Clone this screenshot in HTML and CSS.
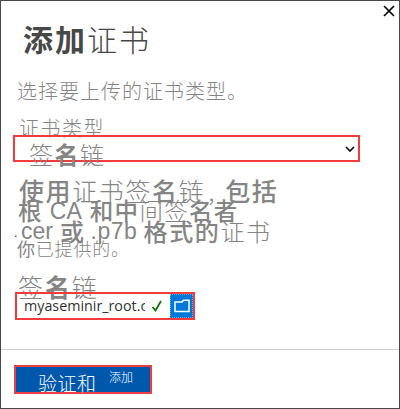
FILE: index.html
```html
<!DOCTYPE html>
<html lang="zh-CN">
<head>
<meta charset="utf-8">
<title>添加证书</title>
<link rel="stylesheet" href="styles.css">
</head>
<body>
<main class="dialog">
  <svg class="close" viewBox="0 0 12 12"><path d="M1 1L11 11M11 1L1 11"/></svg>
  <h1 class="row title"><b>添加</b><span>证书</span></h1>
  <p class="row intro">选择要上传的证书类型。</p>
  <div class="row label">证书类型</div>
  <div class="select">
    <span class="value">签<b>名</b>链</span>
    <svg class="chevron" viewBox="0 0 10 6"><path d="M1 1L5 5L9 1"/></svg>
  </div>
  <div class="help">
    <div class="row first"><b>使用</b>证书签<b>名</b>链<span class="comma">,</span><b>包括</b></div>
    <div class="row second"><b>根</b><span class="latin ca">CA</span><b>和中</b>间签<b>名者</b></div>
    <div class="row third"><span class="dot">.</span><span class="latin cer">cer</span><b>或</b><span class="latin ext">.p7b</span><b>格式的</b>证书</div>
    <div class="row fourth"><b>你</b>已提供的。</div>
  </div>
  <div class="row chain">签<b>名</b>链</div>
  <div class="file">
    <span class="name">myaseminir_root.ce</span>
    <svg class="check" viewBox="0 0 12 12"><path d="M1.5 7L4.5 10.5L10 1"/></svg>
    <span class="browse"><svg viewBox="0 0 16 14"><path d="M1 12.5V3H8L9.5 1.2H15V12.5Z"/></svg></span>
  </div>
  <footer class="footer">
    <div class="button"><span class="verify">验证和</span><span class="add">添加</span></div>
  </footer>
</main>
</body>
</html>
```
FILE: styles.css
```css
* { box-sizing: border-box; }
body { margin: 0; font-family: "Noto Sans CJK SC", sans-serif; font-weight: 300; }
b { font-weight: 500; }
.dialog { position: relative; display: flex; flex-direction: column; width: 400px; height: 409px; border: 1px solid #484848; background: #fff; color: #858585; overflow: hidden; }
.close { position: absolute; left: 382px; top: 4px; width: 12px; height: 12px; fill: none; stroke: #000; stroke-width: 1.7; }
.row { display: flex; align-items: center; flex: none; margin: 0; line-height: 1; white-space: pre; }
.title { height: 40px; margin-top: 17px; padding-left: 22px; font-size: 30px; letter-spacing: 2px; font-weight: 300; color: #484848; }
.title b { font-weight: 700; }
.intro { height: 20px; margin-top: 23px; padding-left: 16px; font-size: 20px; letter-spacing: 1px; }
.label { height: 20px; margin-top: 17px; padding-left: 18px; font-size: 20px; letter-spacing: 1.5px; }
.select { display: flex; flex: none; align-items: center; justify-content: space-between; width: 347px; height: 27px; margin: -3px 0 0 12px; padding: 0 3px 0 14px; border: 2px solid #f13c3c; }
.value { margin-top: 10px; line-height: 24px; font-size: 24px; letter-spacing: 1.5px; }
.value b, .chain b { font-weight: 700; }
.chevron { width: 10px; height: 6px; fill: none; stroke: #000; stroke-width: 1.6; }
.help { flex: none; height: 79px; margin-top: 18px; }
.first { height: 20px; padding-left: 18px; font-size: 25px; letter-spacing: 1.6px; }
.comma { width: 20px; padding-left: 3px; }
.second { height: 22px; padding-left: 17px; font-size: 23.5px; letter-spacing: 1.3px; }
.third { height: 18px; padding-left: 13px; font-size: 24px; letter-spacing: 1.6px; }
.fourth { height: 16px; padding-left: 16px; font-size: 18px; letter-spacing: .8px; }
.fourth b { font-weight: 400; }
.latin { font-family: "Liberation Sans", sans-serif; font-weight: 400; font-size: 23px; letter-spacing: 0; }
.ca { width: 47px; padding-left: 7px; }
.cer { width: 39px; }
.ext { width: 58px; padding-left: 5px; letter-spacing: .5px; }
.dot { width: 7px; font-size: 14px; color: #222; }
.chain { height: 26px; margin-top: 14px; padding-left: 17px; font-size: 25px; letter-spacing: 1.9px; }
.file { display: flex; flex: none; align-items: center; width: 180px; height: 28px; margin: -7px 0 0 14px; padding-left: 7px; border: 2px solid #f13c3c; }
.name { width: 121px; overflow: hidden; font: 400 14.3px/20px "Open Sans", sans-serif; color: #333; white-space: nowrap; }
.check { width: 12px; height: 12px; margin-left: 6px; fill: none; stroke: #087808; stroke-width: 1.8; }
.browse { display: flex; align-items: center; justify-content: center; width: 23px; height: 24px; margin-left: 7px; border: 1px dotted #69aeea; background: #0078d7; }
.browse svg { width: 16px; height: 14px; fill: none; stroke: #fff; stroke-width: 1.5; }
.footer { flex: 1; margin-top: 29px; padding: 15px 0 0 13px; border-top: 1px solid #d2d2d2; }
.button { display: flex; width: 138px; height: 29px; padding-left: 22px; border: 2px solid #ec3d40; background: #0058ad; color: #fff; line-height: 1; white-space: nowrap; }
.verify { width: 71px; padding-top: 6px; font-size: 19px; letter-spacing: .5px; }
.add { padding-top: 4px; font-size: 12px; }
```
